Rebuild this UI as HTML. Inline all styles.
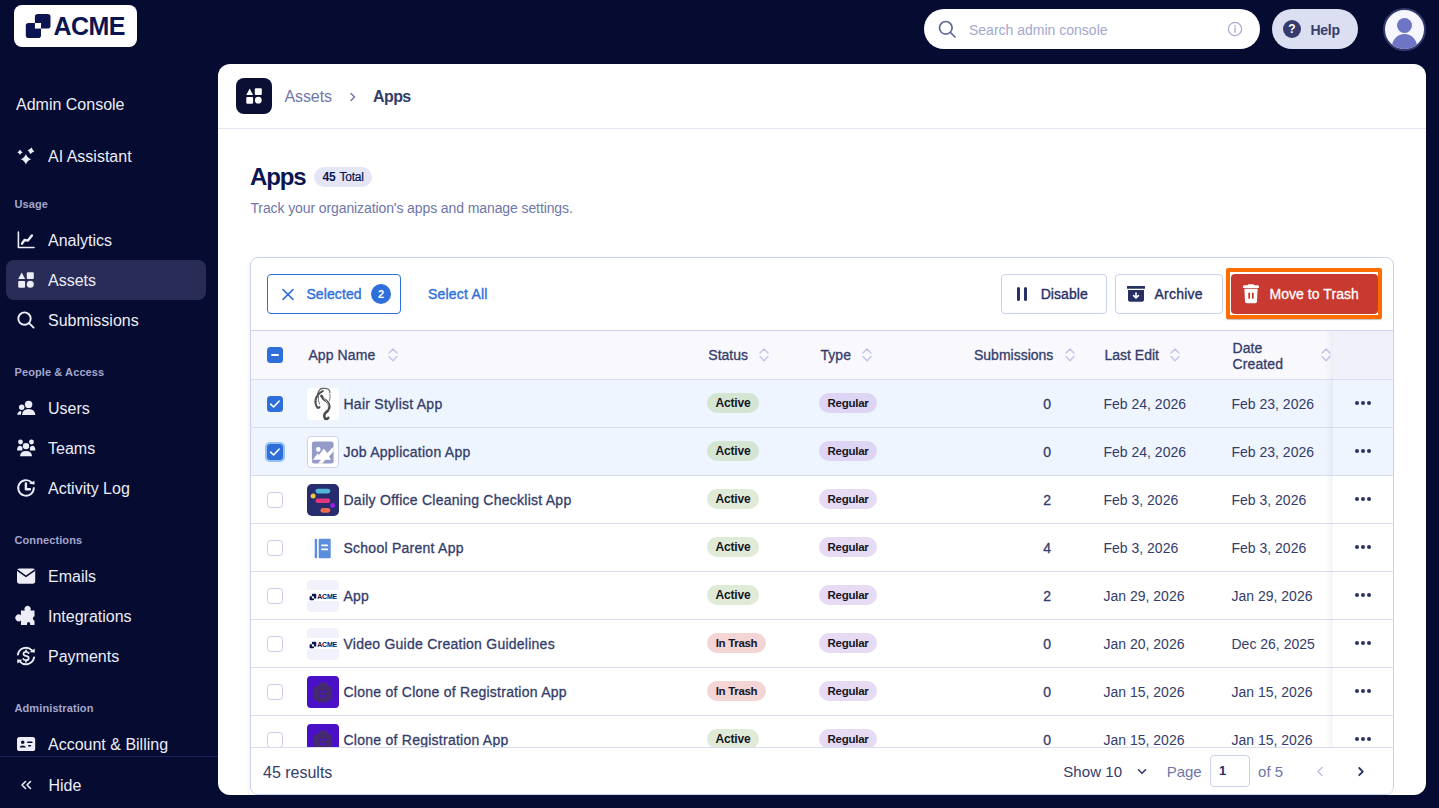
<!DOCTYPE html>
<html><head><meta charset="utf-8">
<style>
*{box-sizing:border-box;margin:0;padding:0}
html,body{width:1439px;height:808px;overflow:hidden;background:#060B31;font-family:"Liberation Sans",sans-serif;position:relative}
.a{position:absolute}
.t{position:absolute;white-space:nowrap}
.med{-webkit-text-stroke:0.25px currentColor}
svg{position:absolute;overflow:visible}
</style></head><body>
<div class="a" style="left:14px;top:5px;width:123px;height:42px;background:#fff;border-radius:8px"></div>
<svg style="left:25px;top:13px" width="27" height="26" viewBox="0 0 27 26"><rect x="0.8" y="10" width="15.2" height="15" rx="2.8" fill="#0A1551"/><rect x="9.9" y="0.9" width="15.6" height="14.7" rx="2.8" fill="#0A1551"/><rect x="9.9" y="10" width="6.1" height="5.6" fill="#fff"/></svg>
<div class="t" style="left:53.5px;top:11.0px;font-size:25px;line-height:30px;color:#0A1551;font-weight:bold;letter-spacing:-0.6px;">ACME</div>
<div class="a" style="left:924px;top:9px;width:336px;height:40px;background:#fff;border-radius:20px"></div>
<svg style="left:936px;top:19px" width="22" height="22" viewBox="0 0 22 22"><circle cx="9.8" cy="8.8" r="6.3" fill="none" stroke="#5F6699" stroke-width="1.7"/><path d="M14.5 13.5l4.5 4.5" stroke="#5F6699" stroke-width="1.7" stroke-linecap="round"/></svg>
<div class="t" style="left:969px;top:19.6px;font-size:14px;line-height:20px;color:#A3A8CD;font-weight:normal;">Search admin console</div>
<svg style="left:1227px;top:21px" width="16" height="16" viewBox="0 0 16 16"><circle cx="8" cy="8" r="6.6" fill="none" stroke="#A3A8CD" stroke-width="1.2"/><path d="M8 7v4.2" stroke="#A3A8CD" stroke-width="1.3" stroke-linecap="round"/><circle cx="8" cy="4.9" r="0.8" fill="#A3A8CD"/></svg>
<div class="a" style="left:1272px;top:9px;width:86px;height:40px;background:#DCDEF2;border-radius:20px"></div>
<div class="a" style="left:1283px;top:20px;width:18px;height:18px;background:#363C6B;border-radius:50%"></div>
<div class="t" style="left:1283px;top:20px;width:18px;height:18px;line-height:18px;text-align:center;color:#fff;font-size:12px;font-weight:bold">?</div>
<div class="t" style="left:1310.5px;top:19.6px;font-size:14px;line-height:20px;color:#363C6B;font-weight:bold;letter-spacing:-0.3px;">Help</div>
<div class="a" style="left:1383px;top:7.5px;width:43px;height:43px;border-radius:50%;background:#F5F6FF;border:2.5px solid #35396B;overflow:hidden"><div class="a" style="left:11.5px;top:8.7px;width:15px;height:15px;border-radius:50%;background:#6E75C4"></div><div class="a" style="left:6.5px;top:24px;width:25px;height:22px;border-radius:12.5px 12.5px 0 0;background:#6E75C4"></div></div>
<div class="t" style="left:16px;top:95.0px;font-size:16px;line-height:20px;color:#ECEDF7;font-weight:normal;">Admin Console</div>
<div class="a" style="left:6px;top:260px;width:200px;height:40px;background:#292C57;border-radius:8px"></div>
<svg style="left:12px;top:140px" width="28" height="28" viewBox="0 0 28 28"><g fill="#ECEDF7"><path d="M8.00 9.50 Q8.83 11.47 10.80 12.30 Q8.83 13.13 8.00 15.10 Q7.17 13.13 5.20 12.30 Q7.17 11.47 8.00 9.50z"/><path d="M19.71 7.57 Q20.43 9.97 22.33 11.61 Q19.93 12.33 18.29 14.23 Q17.57 11.83 15.67 10.19 Q18.07 9.47 19.71 7.57z"/><path d="M13.90 13.90 Q15.25 17.85 19.20 19.20 Q15.25 20.55 13.90 24.50 Q12.55 20.55 8.60 19.20 Q12.55 17.85 13.90 13.90z"/></g></svg>
<div class="t" style="left:48px;top:147.0px;font-size:16px;line-height:20px;color:#ECEDF7;font-weight:normal;">AI Assistant</div>
<svg style="left:12px;top:226px" width="28" height="28" viewBox="0 0 28 28"><path d="M6.4 6v15.5H22" fill="none" stroke="#ECEDF7" stroke-width="1.6" stroke-linecap="round" stroke-linejoin="round"/><path d="M10 17.7L12.5 14L15.9 14.6L19.9 9.5" fill="none" stroke="#ECEDF7" stroke-width="2.4" stroke-linecap="round" stroke-linejoin="round"/></svg>
<div class="t" style="left:48px;top:231.0px;font-size:16px;line-height:20px;color:#ECEDF7;font-weight:normal;">Analytics</div>
<svg style="left:18px;top:272px" width="16" height="16" viewBox="0 0 16 16"><g fill="#ECEDF7"><path d="M3.7 0.4L7.1 7H0.2z"/><rect x="8.8" y="0.2" width="7" height="6.8" rx="1"/><rect x="0.2" y="8.9" width="6.9" height="6.8" rx="1"/><circle cx="12.3" cy="12.2" r="3.5"/></g></svg>
<div class="t" style="left:48px;top:271.0px;font-size:16px;line-height:20px;color:#ECEDF7;font-weight:normal;">Assets</div>
<svg style="left:12px;top:306px" width="28" height="28" viewBox="0 0 28 28"><circle cx="12.5" cy="12.6" r="6.2" fill="none" stroke="#ECEDF7" stroke-width="1.9"/><path d="M17.3 17.3L21.6 21.6" stroke="#ECEDF7" stroke-width="1.9" stroke-linecap="round"/></svg>
<div class="t" style="left:48px;top:311.0px;font-size:16px;line-height:20px;color:#ECEDF7;font-weight:normal;">Submissions</div>
<svg style="left:12px;top:394px" width="28" height="28" viewBox="0 0 28 28"><g fill="#ECEDF7"><circle cx="16.6" cy="10.4" r="3.7"/><path d="M10 21.1 Q10.3 14.9 16.6 14.9 Q22.9 14.9 23.4 21.1z"/><circle cx="9.7" cy="13.2" r="2.7"/><path d="M5.2 20.8 Q5.6 17.2 9.4 17 L8.9 20.8z"/></g></svg>
<div class="t" style="left:48px;top:399.0px;font-size:16px;line-height:20px;color:#ECEDF7;font-weight:normal;">Users</div>
<svg style="left:12px;top:434px" width="28" height="28" viewBox="0 0 28 28"><g fill="#ECEDF7"><circle cx="8.5" cy="8" r="2.4"/><circle cx="19.5" cy="8" r="2.4"/><circle cx="14" cy="12.1" r="3.2"/><path d="M5 16.6 Q5.2 11.8 8 11.8 Q9.6 11.8 10.2 13.3 Q10.6 15 10.3 16.6z"/><path d="M23.4 16.6 Q23.2 11.8 20.3 11.8 Q18.7 11.8 18.2 13.3 Q17.8 15 18 16.6z"/><path d="M8 22.2 Q8.3 17 14 17 Q19.7 17 20.1 22.2z"/></g></svg>
<div class="t" style="left:48px;top:439.0px;font-size:16px;line-height:20px;color:#ECEDF7;font-weight:normal;">Teams</div>
<svg style="left:12px;top:474px" width="28" height="28" viewBox="0 0 28 28"><path d="M21.8 14A7.8 7.8 0 1 1 19.6 8.5" fill="none" stroke="#ECEDF7" stroke-width="1.9" stroke-linecap="round"/><path d="M17 9.8L22.6 10.5L22.5 6.7z" fill="#ECEDF7"/><path d="M13.9 9.5v5.8h4" fill="none" stroke="#ECEDF7" stroke-width="2.4" stroke-linecap="round" stroke-linejoin="round"/></svg>
<div class="t" style="left:48px;top:479.0px;font-size:16px;line-height:20px;color:#ECEDF7;font-weight:normal;">Activity Log</div>
<svg style="left:12px;top:562px" width="28" height="28" viewBox="0 0 28 28"><rect x="5" y="6.4" width="18.2" height="15.3" rx="2.6" fill="#ECEDF7"/><path d="M5.2 8.2L14 14.4L22.9 8.2" fill="none" stroke="#060B31" stroke-width="1.5" stroke-linejoin="round"/></svg>
<div class="t" style="left:48px;top:567.0px;font-size:16px;line-height:20px;color:#ECEDF7;font-weight:normal;">Emails</div>
<svg style="left:12px;top:602px" width="28" height="28" viewBox="0 0 28 28"><path fill="#ECEDF7" d="M8.9 8.6h3.9a3.2 3.2 0 1 1 5.6 0h4.1v5.6a2.4 2.4 0 0 0 0 4.5v4.4h-4.3v-1.4a1.6 1.6 0 0 0-3.2 0v1.4H8.9v-4.6a3.4 3.4 0 1 1 0-5.3z"/></svg>
<div class="t" style="left:48px;top:607.0px;font-size:16px;line-height:20px;color:#ECEDF7;font-weight:normal;">Integrations</div>
<svg style="left:12px;top:642px" width="28" height="28" viewBox="0 0 28 28"><g fill="none" stroke="#ECEDF7" stroke-width="1.9" stroke-linecap="round"><path d="M5.9 12.6A8.2 8.2 0 0 1 19.8 8.2"/><path d="M22.1 15.4A8.2 8.2 0 0 1 8.2 19.8"/></g><path fill="#ECEDF7" d="M17.5 10.2L22.9 10.6L22.6 6.6z M10.5 17.8L5.1 17.4L5.4 21.4z"/><path d="M16.6 11.2Q16 9.9 14 9.9Q11.5 9.9 11.5 11.9Q11.5 13.4 14 13.9Q16.7 14.4 16.7 16.2Q16.7 18.2 14 18.2Q11.9 18.2 11.3 16.8M14 8.3v1.6M14 18.2v1.6" fill="none" stroke="#ECEDF7" stroke-width="1.7" stroke-linecap="round" stroke-linejoin="round"/></svg>
<div class="t" style="left:48px;top:647.0px;font-size:16px;line-height:20px;color:#ECEDF7;font-weight:normal;">Payments</div>
<svg style="left:12px;top:730px" width="28" height="28" viewBox="0 0 28 28"><rect x="5" y="7" width="18.2" height="14" rx="2.6" fill="#ECEDF7"/><g fill="#060B31"><circle cx="10.7" cy="12.3" r="1.7"/><path d="M7.6 17.6 Q8 15.5 10.7 15.5 Q13.5 15.5 13.9 17.6z"/><rect x="15" y="11.5" width="5.6" height="1.5" rx="0.75"/><rect x="16" y="14.9" width="3.2" height="1.5" rx="0.75"/></g></svg>
<div class="t" style="left:48px;top:735.0px;font-size:16px;line-height:20px;color:#ECEDF7;font-weight:normal;">Account &amp; Billing</div>
<div class="t" style="left:14.5px;top:194.0px;font-size:11px;line-height:20px;color:#A3A7CC;font-weight:bold;letter-spacing:0.1px;">Usage</div>
<div class="t" style="left:14.5px;top:362.0px;font-size:11px;line-height:20px;color:#A3A7CC;font-weight:bold;letter-spacing:0.1px;">People &amp; Access</div>
<div class="t" style="left:14.5px;top:530.0px;font-size:11px;line-height:20px;color:#A3A7CC;font-weight:bold;letter-spacing:0.1px;">Connections</div>
<div class="t" style="left:14.5px;top:698.0px;font-size:11px;line-height:20px;color:#A3A7CC;font-weight:bold;letter-spacing:0.1px;">Administration</div>
<div class="a" style="left:0;top:756px;width:218px;height:1px;background:#1A1F5C"></div>
<svg style="left:20px;top:780px" width="12" height="10" viewBox="0 0 12 10"><path d="M5.5 1.5L2 5L5.5 8.5M10.5 1.5L7 5L10.5 8.5" fill="none" stroke="#ECEDF7" stroke-width="1.6" stroke-linecap="round" stroke-linejoin="round"/></svg>
<div class="t" style="left:48.5px;top:776.0px;font-size:16px;line-height:20px;color:#ECEDF7;font-weight:normal;">Hide</div>
<div class="a" style="left:218px;top:64px;width:1208px;height:731px;background:#fff;border-radius:12px;overflow:hidden">
<div class="a" style="left:18px;top:14px;width:36px;height:36px;background:#0A0F33;border-radius:8px"></div>
<svg style="left:28px;top:24px" width="16" height="16" viewBox="0 0 16 16"><g fill="#fff"><path d="M3.7 0.6L7.1 7H0.3z"/><rect x="8.8" y="0.3" width="7" height="6.7" rx="1"/><rect x="0.3" y="8.9" width="6.8" height="6.8" rx="1"/><circle cx="12.3" cy="12.2" r="3.4"/></g></svg>
<div class="t" style="left:66.5px;top:23.299999999999997px;font-size:16px;line-height:20px;color:#6F76A7;font-weight:normal;letter-spacing:-0.1px;">Assets</div>
<svg style="left:131px;top:28px" width="8" height="10" viewBox="0 0 8 10"><path d="M2 1.5L5.5 5L2 8.5" fill="none" stroke="#6F76A7" stroke-width="1.5" stroke-linecap="round" stroke-linejoin="round"/></svg>
<div class="t" style="left:155px;top:23.299999999999997px;font-size:16px;line-height:20px;color:#343C6A;font-weight:bold;letter-spacing:-0.6px;">Apps</div>
<div class="a" style="left:0;top:64px;width:1208px;height:1px;background:#E3E5F5"></div>
<div class="t" style="left:32px;top:97.69999999999999px;font-size:24px;line-height:30px;color:#0A1551;font-weight:bold;letter-spacing:-1.1px;">Apps</div>
<div class="a" style="left:96px;top:103px;width:58px;height:20px;background:#E4E6F6;border-radius:10px"></div>
<div class="t" style="left:104.5px;top:102.5px;font-size:12px;line-height:20px;color:#0A1551;font-weight:bold;letter-spacing:-0.1px;">45</div>
<div class="t" style="left:121.39999999999998px;top:102.5px;font-size:12px;line-height:20px;color:#0A1551;font-weight:normal;letter-spacing:-0.2px;-webkit-text-stroke:0.2px #0A1551;">Total</div>
<div class="t" style="left:32.400000000000006px;top:133.6px;font-size:14px;line-height:20px;color:#6F76A7;font-weight:normal;letter-spacing:-0.1px;">Track your organization's apps and manage settings.</div>
</div>
<div class="a" style="left:245px;top:263px;width:5px;height:532px;background:linear-gradient(to right, rgba(120,110,90,0), rgba(120,110,90,0.05))"></div>
<div class="a" style="left:250px;top:257px;width:1144px;height:538px;border:1px solid #CBD0EE;border-radius:8px;overflow:hidden;background:#fff">
<div class="a" style="left:16px;top:16px;width:134px;height:40px;border:1px solid #2E6FDB;border-radius:4px"></div>
<svg style="left:31px;top:31px" width="12" height="11" viewBox="0 0 12 11"><path d="M1 0.6L11 10.4M11 0.6L1 10.4" stroke="#2E6FDB" stroke-width="1.5" stroke-linecap="round"/></svg>
<div class="t" style="left:55.39999999999998px;top:26.0px;font-size:14px;line-height:20px;color:#2E6FDB;font-weight:normal;letter-spacing:0.1px;-webkit-text-stroke:0.35px currentColor;">Selected</div>
<div class="a" style="left:120px;top:26px;width:20px;height:20px;background:#2E6FDB;border-radius:50%"></div>
<div class="t" style="left:120px;top:26px;width:20px;line-height:20px;text-align:center;font-size:11px;font-weight:bold;color:#fff">2</div>
<div class="t" style="left:177px;top:26.0px;font-size:14px;line-height:20px;color:#2E6FDB;font-weight:normal;letter-spacing:0.2px;-webkit-text-stroke:0.35px currentColor;">Select All</div>
<div class="a" style="left:750px;top:16px;width:106px;height:40px;border:1px solid #CBD0EE;border-radius:4px"></div>
<div class="a" style="left:766px;top:29.30000000000001px;width:3px;height:13.5px;background:#283063;border-radius:1.5px"></div>
<div class="a" style="left:773px;top:29.30000000000001px;width:3px;height:13.5px;background:#283063;border-radius:1.5px"></div>
<div class="t" style="left:789.7px;top:26.0px;font-size:14px;line-height:20px;color:#283063;font-weight:normal;letter-spacing:0.05px;-webkit-text-stroke:0.35px currentColor;">Disable</div>
<div class="a" style="left:864px;top:16px;width:108px;height:40px;border:1px solid #CBD0EE;border-radius:4px"></div>
<svg style="left:876px;top:28px" width="18" height="16" viewBox="0 0 18 16"><rect x="0" y="0" width="18" height="2.7" rx="0.5" fill="#283063"/><path d="M1 4h16v9.8a2 2 0 0 1-2 2H3a2 2 0 0 1-2-2z" fill="#283063"/><path d="M9 7.2v4.5M6.6 9.6L9 12L11.4 9.6" fill="none" stroke="#fff" stroke-width="1.7" stroke-linecap="round" stroke-linejoin="round"/></svg>
<div class="t" style="left:903.4000000000001px;top:26.0px;font-size:14px;line-height:20px;color:#283063;font-weight:normal;letter-spacing:0.25px;-webkit-text-stroke:0.35px currentColor;">Archive</div>
<div class="a" style="left:975px;top:10px;width:156px;height:51px;border:4px solid #FF6D00;border-radius:2px;background:#fff;box-shadow:0 1px 1px rgba(0,0,0,0.25)"></div>
<div class="a" style="left:980px;top:16px;width:147px;height:40px;background:#C8392F;border-radius:4px"></div>
<svg style="left:992px;top:26px" width="16" height="20" viewBox="0 0 16 20"><path d="M0.2 1.8Q0.4 1.2 1.2 1.2H4.6Q5 0.3 6 0.3H10Q11 0.3 11.4 1.2H14.8Q15.6 1.2 15.8 1.8L16 4H0z" fill="#fff"/><path d="M1.4 4.8H14.6L14 17.2Q13.9 19.2 12 19.2H4Q2.1 19.2 2 17.2z" fill="#fff"/><rect x="5.3" y="8.6" width="1.8" height="6.2" rx="0.9" fill="#C8392F"/><rect x="8.9" y="8.6" width="1.8" height="6.2" rx="0.9" fill="#C8392F"/></svg>
<div class="t" style="left:1018.5px;top:26.0px;font-size:14px;line-height:20px;color:#fff;font-weight:normal;letter-spacing:0.05px;-webkit-text-stroke:0.3px currentColor;">Move to Trash</div>
<div class="a" style="left:0px;top:72px;width:1142px;height:1px;background:#CFD3EE"></div>
<div class="a" style="left:0px;top:73px;width:1142px;height:48px;background:#F8F8FD"></div>
<div class="a" style="left:0px;top:121px;width:1142px;height:1px;background:#DADDF2"></div>
<div class="a" style="left:16px;top:89px;width:16px;height:16px;background:#2E6FDB;border-radius:3.5px"></div>
<div class="a" style="left:20px;top:96.19999999999999px;width:8px;height:1.8px;background:#fff;border-radius:1px"></div>
<div class="t" style="left:57.39999999999998px;top:87.0px;font-size:14px;line-height:20px;color:#343C6A;font-weight:normal;letter-spacing:0.1px;-webkit-text-stroke:0.3px currentColor;">App Name</div>
<svg style="left:137px;top:90px" width="11" height="14" viewBox="0 0 11 14"><path d="M1 5L5 0.9L9 5M1 8.6L5 12.7L9 8.6" fill="none" stroke="#C3C7EC" stroke-width="1.5" stroke-linecap="round" stroke-linejoin="round"/></svg>
<div class="t" style="left:457.29999999999995px;top:87.0px;font-size:14px;line-height:20px;color:#343C6A;font-weight:normal;-webkit-text-stroke:0.3px currentColor;">Status</div>
<svg style="left:508px;top:90px" width="11" height="14" viewBox="0 0 11 14"><path d="M1 5L5 0.9L9 5M1 8.6L5 12.7L9 8.6" fill="none" stroke="#C3C7EC" stroke-width="1.5" stroke-linecap="round" stroke-linejoin="round"/></svg>
<div class="t" style="left:569.6px;top:87.0px;font-size:14px;line-height:20px;color:#343C6A;font-weight:normal;-webkit-text-stroke:0.3px currentColor;">Type</div>
<svg style="left:611px;top:90px" width="11" height="14" viewBox="0 0 11 14"><path d="M1 5L5 0.9L9 5M1 8.6L5 12.7L9 8.6" fill="none" stroke="#C3C7EC" stroke-width="1.5" stroke-linecap="round" stroke-linejoin="round"/></svg>
<div class="t" style="left:723px;top:87.0px;font-size:14px;line-height:20px;color:#343C6A;font-weight:normal;-webkit-text-stroke:0.3px currentColor;">Submissions</div>
<svg style="left:814px;top:90px" width="11" height="14" viewBox="0 0 11 14"><path d="M1 5L5 0.9L9 5M1 8.6L5 12.7L9 8.6" fill="none" stroke="#C3C7EC" stroke-width="1.5" stroke-linecap="round" stroke-linejoin="round"/></svg>
<div class="t" style="left:853.5px;top:87.0px;font-size:14px;line-height:20px;color:#343C6A;font-weight:normal;-webkit-text-stroke:0.3px currentColor;">Last Edit</div>
<svg style="left:919px;top:90px" width="11" height="14" viewBox="0 0 11 14"><path d="M1 5L5 0.9L9 5M1 8.6L5 12.7L9 8.6" fill="none" stroke="#C3C7EC" stroke-width="1.5" stroke-linecap="round" stroke-linejoin="round"/></svg>
<div class="t" style="left:981.5999999999999px;top:79.5px;font-size:14px;line-height:20px;color:#343C6A;font-weight:normal;-webkit-text-stroke:0.3px currentColor;">Date</div>
<div class="t" style="left:981.5999999999999px;top:95.5px;font-size:14px;line-height:20px;color:#343C6A;font-weight:normal;letter-spacing:0.1px;-webkit-text-stroke:0.3px currentColor;">Created</div>
<svg style="left:1070px;top:90px" width="11" height="14" viewBox="0 0 11 14"><path d="M1 5L5 0.9L9 5M1 8.6L5 12.7L9 8.6" fill="none" stroke="#C3C7EC" stroke-width="1.5" stroke-linecap="round" stroke-linejoin="round"/></svg>
<div class="a" style="left:0px;top:122px;width:1142px;height:47px;background:#EEF5FE"></div>
<div class="a" style="left:0px;top:169px;width:1142px;height:1px;background:#DADDF2"></div>
<div class="a" style="left:16px;top:137.5px;width:16px;height:16px;background:#2E6FDB;border-radius:3.5px"></div>
<svg style="left:16px;top:137.5px" width="16" height="16" viewBox="0 0 16 16"><path d="M3.6 8.2L6.6 11L12.2 5" fill="none" stroke="#fff" stroke-width="1.6" stroke-linecap="round" stroke-linejoin="round"/></svg>
<div class="a" style="left:56px;top:129.5px;width:32px;height:32px;background:#fff;border-radius:4px"></div>
<svg style="left:56px;top:129.5px" width="32" height="32" viewBox="0 0 32 32"><g fill="none" stroke-linecap="round" stroke-linejoin="round"><path d="M10.6 6.4Q12 1 15 0.5Q19.5 0 21.5 1.2Q23 2.5 22.9 4.5" stroke="#6A6A6A" stroke-width="1.3"/><path d="M15.8 3.1Q10 6 8.6 11.5Q7.8 16 10.4 19.6Q12 20.5 12.5 19" stroke="#4E4E4E" stroke-width="2"/><path d="M11.5 8Q10.5 12 12.5 16" stroke="#777" stroke-width="1"/><path d="M14.4 7.8Q16 11 19.1 12.8Q22.6 15.5 22.2 19.8Q21.2 23 17.8 25.5Q16.5 28 18 30.6Q19.8 31.5 21.3 29.8" stroke="#4A4A4A" stroke-width="2.6"/><path d="M16.5 9.8Q19 12.6 20.8 15.2Q21.7 18.2 20.2 21.5" stroke="#fff" stroke-width="0.7"/><path d="M22.9 6.4Q23.6 9.5 22.4 12.5" stroke="#8A8A8A" stroke-width="1.1"/></g></svg>
<div class="t" style="left:92.5px;top:135.5px;font-size:14px;line-height:20px;color:#343C6A;font-weight:normal;letter-spacing:0.25px;-webkit-text-stroke:0.3px currentColor;">Hair Stylist App</div>
<div class="a" style="left:456px;top:135.0px;width:52px;height:20px;background:#D4E6D3;border-radius:10px"></div>
<div class="t" style="left:456px;top:135.0px;width:52px;line-height:20px;text-align:center;font-size:12px;font-weight:bold;letter-spacing:-0.15px;color:#16161F">Active</div>
<div class="a" style="left:568px;top:135.0px;width:58px;height:20px;background:#DDD5F3;border-radius:10px"></div>
<div class="t" style="left:568px;top:135.0px;width:58px;line-height:20px;text-align:center;font-size:11.5px;font-weight:bold;letter-spacing:-0.25px;color:#16161F">Regular</div>
<div class="t" style="left:600px;width:200px;top:135.5px;line-height:20px;text-align:right;font-size:14px;color:#343C6A;-webkit-text-stroke:0.3px currentColor;">0</div>
<div class="t" style="left:852.5px;top:135.5px;font-size:14px;line-height:20px;color:#343C6A;font-weight:normal;">Feb 24, 2026</div>
<div class="t" style="left:980.5px;top:135.5px;font-size:14px;line-height:20px;color:#343C6A;font-weight:normal;">Feb 23, 2026</div>
<div class="a" style="left:0px;top:170px;width:1142px;height:47px;background:#EEF5FE"></div>
<div class="a" style="left:0px;top:217px;width:1142px;height:1px;background:#DADDF2"></div>
<div class="a" style="left:14px;top:183.5px;width:20px;height:20px;background:#93C2F7;border-radius:5px"></div>
<div class="a" style="left:16px;top:185.5px;width:16px;height:16px;background:#2E6FDB;border-radius:3.5px"></div>
<svg style="left:16px;top:185.5px" width="16" height="16" viewBox="0 0 16 16"><path d="M3.6 8.2L6.6 11L12.2 5" fill="none" stroke="#fff" stroke-width="1.6" stroke-linecap="round" stroke-linejoin="round"/></svg>
<div class="a" style="left:56px;top:177.5px;width:32px;height:32px;background:#fff;border:1px solid #CDD1EE;border-radius:4px"></div>
<svg style="left:56px;top:177.5px" width="32" height="32" viewBox="0 0 32 32"><rect x="4.9" y="5.6" width="21.7" height="21.9" rx="2.5" fill="#959BC7"/><g fill="#fff"><circle cx="11.3" cy="13.4" r="2.3"/><path d="M5.5 24.5L10.5 17.5L12 19L16.8 12.8L20.3 17L26.6 10.5V15.3L22 20.5L24 23.8H18.2L15.4 27.5H11L14 23.8H5z"/></g></svg>
<div class="t" style="left:92.5px;top:183.5px;font-size:14px;line-height:20px;color:#343C6A;font-weight:normal;letter-spacing:0.25px;-webkit-text-stroke:0.3px currentColor;">Job Application App</div>
<div class="a" style="left:456px;top:183.0px;width:52px;height:20px;background:#D4E6D3;border-radius:10px"></div>
<div class="t" style="left:456px;top:183.0px;width:52px;line-height:20px;text-align:center;font-size:12px;font-weight:bold;letter-spacing:-0.15px;color:#16161F">Active</div>
<div class="a" style="left:568px;top:183.0px;width:58px;height:20px;background:#DDD5F3;border-radius:10px"></div>
<div class="t" style="left:568px;top:183.0px;width:58px;line-height:20px;text-align:center;font-size:11.5px;font-weight:bold;letter-spacing:-0.25px;color:#16161F">Regular</div>
<div class="t" style="left:600px;width:200px;top:183.5px;line-height:20px;text-align:right;font-size:14px;color:#343C6A;-webkit-text-stroke:0.3px currentColor;">0</div>
<div class="t" style="left:852.5px;top:183.5px;font-size:14px;line-height:20px;color:#343C6A;font-weight:normal;">Feb 24, 2026</div>
<div class="t" style="left:980.5px;top:183.5px;font-size:14px;line-height:20px;color:#343C6A;font-weight:normal;">Feb 23, 2026</div>
<div class="a" style="left:0px;top:265px;width:1142px;height:1px;background:#DADDF2"></div>
<div class="a" style="left:16px;top:233.5px;width:16px;height:16px;background:#fff;border:1.5px solid #C9CDEB;border-radius:3.5px"></div>
<div class="a" style="left:56px;top:225.5px;width:32px;height:32px;background:#262C6D;border-radius:5px"></div>
<svg style="left:56px;top:225.5px" width="32" height="32" viewBox="0 0 32 32"><rect x="8.5" y="4.7" width="14.8" height="4.8" rx="2.4" fill="#50B8D4"/><circle cx="6.1" cy="12" r="2.5" fill="#F5C542"/><rect x="8.5" y="14.5" width="14.8" height="4.5" rx="2.25" fill="#E6367B"/><circle cx="25.6" cy="21.4" r="2.4" fill="#9A20DF"/><rect x="13.4" y="24" width="9.9" height="4.7" rx="2.35" fill="#EE6A4A"/></svg>
<div class="t" style="left:92.5px;top:231.5px;font-size:14px;line-height:20px;color:#343C6A;font-weight:normal;letter-spacing:0.25px;-webkit-text-stroke:0.3px currentColor;">Daily Office Cleaning Checklist App</div>
<div class="a" style="left:456px;top:231.0px;width:52px;height:20px;background:#DFEBD7;border-radius:10px"></div>
<div class="t" style="left:456px;top:231.0px;width:52px;line-height:20px;text-align:center;font-size:12px;font-weight:bold;letter-spacing:-0.15px;color:#16161F">Active</div>
<div class="a" style="left:568px;top:231.0px;width:58px;height:20px;background:#E6DBF3;border-radius:10px"></div>
<div class="t" style="left:568px;top:231.0px;width:58px;line-height:20px;text-align:center;font-size:11.5px;font-weight:bold;letter-spacing:-0.25px;color:#16161F">Regular</div>
<div class="t" style="left:600px;width:200px;top:231.5px;line-height:20px;text-align:right;font-size:14px;color:#343C6A;-webkit-text-stroke:0.3px currentColor;">2</div>
<div class="t" style="left:852.5px;top:231.5px;font-size:14px;line-height:20px;color:#343C6A;font-weight:normal;">Feb 3, 2026</div>
<div class="t" style="left:980.5px;top:231.5px;font-size:14px;line-height:20px;color:#343C6A;font-weight:normal;">Feb 3, 2026</div>
<div class="a" style="left:0px;top:313px;width:1142px;height:1px;background:#DADDF2"></div>
<div class="a" style="left:16px;top:281.5px;width:16px;height:16px;background:#fff;border:1.5px solid #C9CDEB;border-radius:3.5px"></div>
<svg style="left:56px;top:273.5px" width="32" height="32" viewBox="0 0 32 32"><rect x="7.7" y="6.8" width="2.4" height="19.5" rx="1" fill="#5B8EDC"/><rect x="11.7" y="6.8" width="12" height="19.5" rx="1" fill="#5B8EDC"/><rect x="14.1" y="12.6" width="7.1" height="1.6" rx="0.8" fill="#fff"/><rect x="14.1" y="16.6" width="7.1" height="1.6" rx="0.8" fill="#fff"/></svg>
<div class="t" style="left:92.5px;top:279.5px;font-size:14px;line-height:20px;color:#343C6A;font-weight:normal;letter-spacing:0.25px;-webkit-text-stroke:0.3px currentColor;">School Parent App</div>
<div class="a" style="left:456px;top:279.0px;width:52px;height:20px;background:#DFEBD7;border-radius:10px"></div>
<div class="t" style="left:456px;top:279.0px;width:52px;line-height:20px;text-align:center;font-size:12px;font-weight:bold;letter-spacing:-0.15px;color:#16161F">Active</div>
<div class="a" style="left:568px;top:279.0px;width:58px;height:20px;background:#E6DBF3;border-radius:10px"></div>
<div class="t" style="left:568px;top:279.0px;width:58px;line-height:20px;text-align:center;font-size:11.5px;font-weight:bold;letter-spacing:-0.25px;color:#16161F">Regular</div>
<div class="t" style="left:600px;width:200px;top:279.5px;line-height:20px;text-align:right;font-size:14px;color:#343C6A;-webkit-text-stroke:0.3px currentColor;">4</div>
<div class="t" style="left:852.5px;top:279.5px;font-size:14px;line-height:20px;color:#343C6A;font-weight:normal;">Feb 3, 2026</div>
<div class="t" style="left:980.5px;top:279.5px;font-size:14px;line-height:20px;color:#343C6A;font-weight:normal;">Feb 3, 2026</div>
<div class="a" style="left:0px;top:361px;width:1142px;height:1px;background:#DADDF2"></div>
<div class="a" style="left:16px;top:329.5px;width:16px;height:16px;background:#fff;border:1.5px solid #C9CDEB;border-radius:3.5px"></div>
<div class="a" style="left:56px;top:321.5px;width:32px;height:32px;background:#F1F2FB;border-radius:4px"></div>
<div class="a" style="left:56px;top:332.29999999999995px;width:32px;height:10.8px;background:#fff"></div>
<svg style="left:56px;top:321.5px" width="32" height="32" viewBox="0 0 32 32"><path fill="#0A1551" fill-rule="evenodd" d="M5.6 13.8h3a0.7 0.7 0 0 1 0.7 0.7v3.3a0.7 0.7 0 0 1-0.7 0.7H5.6a0.7 0.7 0 0 1-0.7-0.7v-3.3a0.7 0.7 0 0 1 0.7-0.7z M3.3 16.3h3a0.7 0.7 0 0 1 0.7 0.7v2.6a0.7 0.7 0 0 1-0.7 0.7H3.3a0.7 0.7 0 0 1-0.7-0.7v-2.6a0.7 0.7 0 0 1 0.7-0.7z"/><text x="10.2" y="19.4" font-family="Liberation Sans" font-weight="bold" font-size="7" letter-spacing="-0.2" fill="#0A1551">ACME</text></svg>
<div class="t" style="left:92.5px;top:327.5px;font-size:14px;line-height:20px;color:#343C6A;font-weight:normal;letter-spacing:0.25px;-webkit-text-stroke:0.3px currentColor;">App</div>
<div class="a" style="left:456px;top:327.0px;width:52px;height:20px;background:#DFEBD7;border-radius:10px"></div>
<div class="t" style="left:456px;top:327.0px;width:52px;line-height:20px;text-align:center;font-size:12px;font-weight:bold;letter-spacing:-0.15px;color:#16161F">Active</div>
<div class="a" style="left:568px;top:327.0px;width:58px;height:20px;background:#E6DBF3;border-radius:10px"></div>
<div class="t" style="left:568px;top:327.0px;width:58px;line-height:20px;text-align:center;font-size:11.5px;font-weight:bold;letter-spacing:-0.25px;color:#16161F">Regular</div>
<div class="t" style="left:600px;width:200px;top:327.5px;line-height:20px;text-align:right;font-size:14px;color:#343C6A;-webkit-text-stroke:0.3px currentColor;">2</div>
<div class="t" style="left:852.5px;top:327.5px;font-size:14px;line-height:20px;color:#343C6A;font-weight:normal;">Jan 29, 2026</div>
<div class="t" style="left:980.5px;top:327.5px;font-size:14px;line-height:20px;color:#343C6A;font-weight:normal;">Jan 29, 2026</div>
<div class="a" style="left:0px;top:409px;width:1142px;height:1px;background:#DADDF2"></div>
<div class="a" style="left:16px;top:377.5px;width:16px;height:16px;background:#fff;border:1.5px solid #C9CDEB;border-radius:3.5px"></div>
<div class="a" style="left:56px;top:369.5px;width:32px;height:32px;background:#F1F2FB;border-radius:4px"></div>
<div class="a" style="left:56px;top:380.29999999999995px;width:32px;height:10.8px;background:#fff"></div>
<svg style="left:56px;top:369.5px" width="32" height="32" viewBox="0 0 32 32"><path fill="#0A1551" fill-rule="evenodd" d="M5.6 13.8h3a0.7 0.7 0 0 1 0.7 0.7v3.3a0.7 0.7 0 0 1-0.7 0.7H5.6a0.7 0.7 0 0 1-0.7-0.7v-3.3a0.7 0.7 0 0 1 0.7-0.7z M3.3 16.3h3a0.7 0.7 0 0 1 0.7 0.7v2.6a0.7 0.7 0 0 1-0.7 0.7H3.3a0.7 0.7 0 0 1-0.7-0.7v-2.6a0.7 0.7 0 0 1 0.7-0.7z"/><text x="10.2" y="19.4" font-family="Liberation Sans" font-weight="bold" font-size="7" letter-spacing="-0.2" fill="#0A1551">ACME</text></svg>
<div class="t" style="left:92.5px;top:375.5px;font-size:14px;line-height:20px;color:#343C6A;font-weight:normal;letter-spacing:0.25px;-webkit-text-stroke:0.3px currentColor;">Video Guide Creation Guidelines</div>
<div class="a" style="left:456px;top:375.0px;width:59px;height:20px;background:#F3D5D6;border-radius:10px"></div>
<div class="t" style="left:456px;top:375.0px;width:59px;line-height:20px;text-align:center;font-size:11.5px;font-weight:bold;letter-spacing:-0.3px;color:#16161F">In Trash</div>
<div class="a" style="left:568px;top:375.0px;width:58px;height:20px;background:#E6DBF3;border-radius:10px"></div>
<div class="t" style="left:568px;top:375.0px;width:58px;line-height:20px;text-align:center;font-size:11.5px;font-weight:bold;letter-spacing:-0.25px;color:#16161F">Regular</div>
<div class="t" style="left:600px;width:200px;top:375.5px;line-height:20px;text-align:right;font-size:14px;color:#343C6A;-webkit-text-stroke:0.3px currentColor;">0</div>
<div class="t" style="left:852.5px;top:375.5px;font-size:14px;line-height:20px;color:#343C6A;font-weight:normal;">Jan 20, 2026</div>
<div class="t" style="left:980.5px;top:375.5px;font-size:14px;line-height:20px;color:#343C6A;font-weight:normal;">Dec 26, 2025</div>
<div class="a" style="left:0px;top:457px;width:1142px;height:1px;background:#DADDF2"></div>
<div class="a" style="left:16px;top:425.5px;width:16px;height:16px;background:#fff;border:1.5px solid #C9CDEB;border-radius:3.5px"></div>
<div class="a" style="left:56px;top:417.5px;width:32px;height:32px;background:#4A10C8;border-radius:4px"></div>
<svg style="left:56px;top:417.5px" width="32" height="32" viewBox="0 0 32 32"><g fill="#452A70"><rect x="11.8" y="6.8" width="8" height="4.5" rx="0.5"/><rect x="6.8" y="10.3" width="18.2" height="14.3" rx="2.5"/><rect x="10.8" y="23.5" width="9.9" height="2.8" rx="0.5"/></g><g fill="#4A10C8"><circle cx="13.2" cy="15.7" r="1.2"/><circle cx="18.1" cy="15.7" r="1.2"/><path d="M12.3 19.2Q15.6 22.6 18.9 19.2Q15.6 20.6 12.3 19.2z" stroke="#4A10C8" stroke-width="1"/></g></svg>
<div class="t" style="left:92.5px;top:423.5px;font-size:14px;line-height:20px;color:#343C6A;font-weight:normal;letter-spacing:0.25px;-webkit-text-stroke:0.3px currentColor;">Clone of Clone of Registration App</div>
<div class="a" style="left:456px;top:423.0px;width:59px;height:20px;background:#F3D5D6;border-radius:10px"></div>
<div class="t" style="left:456px;top:423.0px;width:59px;line-height:20px;text-align:center;font-size:11.5px;font-weight:bold;letter-spacing:-0.3px;color:#16161F">In Trash</div>
<div class="a" style="left:568px;top:423.0px;width:58px;height:20px;background:#E6DBF3;border-radius:10px"></div>
<div class="t" style="left:568px;top:423.0px;width:58px;line-height:20px;text-align:center;font-size:11.5px;font-weight:bold;letter-spacing:-0.25px;color:#16161F">Regular</div>
<div class="t" style="left:600px;width:200px;top:423.5px;line-height:20px;text-align:right;font-size:14px;color:#343C6A;-webkit-text-stroke:0.3px currentColor;">0</div>
<div class="t" style="left:852.5px;top:423.5px;font-size:14px;line-height:20px;color:#343C6A;font-weight:normal;">Jan 15, 2026</div>
<div class="t" style="left:980.5px;top:423.5px;font-size:14px;line-height:20px;color:#343C6A;font-weight:normal;">Jan 15, 2026</div>
<div class="a" style="left:0px;top:505px;width:1142px;height:1px;background:#DADDF2"></div>
<div class="a" style="left:16px;top:473.5px;width:16px;height:16px;background:#fff;border:1.5px solid #C9CDEB;border-radius:3.5px"></div>
<div class="a" style="left:56px;top:465.5px;width:32px;height:32px;background:#4A10C8;border-radius:4px"></div>
<svg style="left:56px;top:465.5px" width="32" height="32" viewBox="0 0 32 32"><g fill="#452A70"><rect x="11.8" y="6.8" width="8" height="4.5" rx="0.5"/><rect x="6.8" y="10.3" width="18.2" height="14.3" rx="2.5"/><rect x="10.8" y="23.5" width="9.9" height="2.8" rx="0.5"/></g><g fill="#4A10C8"><circle cx="13.2" cy="15.7" r="1.2"/><circle cx="18.1" cy="15.7" r="1.2"/><path d="M12.3 19.2Q15.6 22.6 18.9 19.2Q15.6 20.6 12.3 19.2z" stroke="#4A10C8" stroke-width="1"/></g></svg>
<div class="t" style="left:92.5px;top:471.5px;font-size:14px;line-height:20px;color:#343C6A;font-weight:normal;letter-spacing:0.25px;-webkit-text-stroke:0.3px currentColor;">Clone of Registration App</div>
<div class="a" style="left:456px;top:471.0px;width:52px;height:20px;background:#DFEBD7;border-radius:10px"></div>
<div class="t" style="left:456px;top:471.0px;width:52px;line-height:20px;text-align:center;font-size:12px;font-weight:bold;letter-spacing:-0.15px;color:#16161F">Active</div>
<div class="a" style="left:568px;top:471.0px;width:58px;height:20px;background:#E6DBF3;border-radius:10px"></div>
<div class="t" style="left:568px;top:471.0px;width:58px;line-height:20px;text-align:center;font-size:11.5px;font-weight:bold;letter-spacing:-0.25px;color:#16161F">Regular</div>
<div class="t" style="left:600px;width:200px;top:471.5px;line-height:20px;text-align:right;font-size:14px;color:#343C6A;-webkit-text-stroke:0.3px currentColor;">0</div>
<div class="t" style="left:852.5px;top:471.5px;font-size:14px;line-height:20px;color:#343C6A;font-weight:normal;">Jan 15, 2026</div>
<div class="t" style="left:980.5px;top:471.5px;font-size:14px;line-height:20px;color:#343C6A;font-weight:normal;">Jan 15, 2026</div>
<div class="a" style="left:1074px;top:73px;width:8px;height:464px;background:linear-gradient(to right, rgba(30,40,90,0), rgba(30,40,90,0.05))"></div>
<div class="a" style="left:1082px;top:73px;width:60px;height:48px;background:#F1F1FB"></div>
<div class="a" style="left:1103.8px;top:143.2px;width:4.3px;height:4.3px;background:#2B3160;border-radius:50%"></div>
<div class="a" style="left:1109.8999999999999px;top:143.2px;width:4.3px;height:4.3px;background:#2B3160;border-radius:50%"></div>
<div class="a" style="left:1116.0px;top:143.2px;width:4.3px;height:4.3px;background:#2B3160;border-radius:50%"></div>
<div class="a" style="left:1103.8px;top:191.2px;width:4.3px;height:4.3px;background:#2B3160;border-radius:50%"></div>
<div class="a" style="left:1109.8999999999999px;top:191.2px;width:4.3px;height:4.3px;background:#2B3160;border-radius:50%"></div>
<div class="a" style="left:1116.0px;top:191.2px;width:4.3px;height:4.3px;background:#2B3160;border-radius:50%"></div>
<div class="a" style="left:1103.8px;top:239.2px;width:4.3px;height:4.3px;background:#2B3160;border-radius:50%"></div>
<div class="a" style="left:1109.8999999999999px;top:239.2px;width:4.3px;height:4.3px;background:#2B3160;border-radius:50%"></div>
<div class="a" style="left:1116.0px;top:239.2px;width:4.3px;height:4.3px;background:#2B3160;border-radius:50%"></div>
<div class="a" style="left:1103.8px;top:287.20000000000005px;width:4.3px;height:4.3px;background:#2B3160;border-radius:50%"></div>
<div class="a" style="left:1109.8999999999999px;top:287.20000000000005px;width:4.3px;height:4.3px;background:#2B3160;border-radius:50%"></div>
<div class="a" style="left:1116.0px;top:287.20000000000005px;width:4.3px;height:4.3px;background:#2B3160;border-radius:50%"></div>
<div class="a" style="left:1103.8px;top:335.20000000000005px;width:4.3px;height:4.3px;background:#2B3160;border-radius:50%"></div>
<div class="a" style="left:1109.8999999999999px;top:335.20000000000005px;width:4.3px;height:4.3px;background:#2B3160;border-radius:50%"></div>
<div class="a" style="left:1116.0px;top:335.20000000000005px;width:4.3px;height:4.3px;background:#2B3160;border-radius:50%"></div>
<div class="a" style="left:1103.8px;top:383.20000000000005px;width:4.3px;height:4.3px;background:#2B3160;border-radius:50%"></div>
<div class="a" style="left:1109.8999999999999px;top:383.20000000000005px;width:4.3px;height:4.3px;background:#2B3160;border-radius:50%"></div>
<div class="a" style="left:1116.0px;top:383.20000000000005px;width:4.3px;height:4.3px;background:#2B3160;border-radius:50%"></div>
<div class="a" style="left:1103.8px;top:431.20000000000005px;width:4.3px;height:4.3px;background:#2B3160;border-radius:50%"></div>
<div class="a" style="left:1109.8999999999999px;top:431.20000000000005px;width:4.3px;height:4.3px;background:#2B3160;border-radius:50%"></div>
<div class="a" style="left:1116.0px;top:431.20000000000005px;width:4.3px;height:4.3px;background:#2B3160;border-radius:50%"></div>
<div class="a" style="left:1103.8px;top:479.20000000000005px;width:4.3px;height:4.3px;background:#2B3160;border-radius:50%"></div>
<div class="a" style="left:1109.8999999999999px;top:479.20000000000005px;width:4.3px;height:4.3px;background:#2B3160;border-radius:50%"></div>
<div class="a" style="left:1116.0px;top:479.20000000000005px;width:4.3px;height:4.3px;background:#2B3160;border-radius:50%"></div>
<div class="a" style="left:0px;top:489px;width:1142px;height:48px;background:#fff"></div>
<div class="a" style="left:0px;top:489px;width:1142px;height:1px;background:#DADDF2"></div>
<div class="t" style="left:12px;top:504.5px;font-size:16px;line-height:20px;color:#343C6A;font-weight:normal;">45 results</div>
<div class="t" style="left:812.3px;top:503.5px;font-size:15px;line-height:20px;color:#343C6A;font-weight:normal;letter-spacing:0.05px;">Show 10</div>
<svg style="left:886px;top:509.5px" width="10" height="8" viewBox="0 0 10 8"><path d="M1.5 1.8L5 5.3L8.5 1.8" fill="none" stroke="#343C6A" stroke-width="1.6" stroke-linecap="round" stroke-linejoin="round"/></svg>
<div class="t" style="left:915.75px;top:503.5px;font-size:15px;line-height:20px;color:#6F76A7;font-weight:normal;letter-spacing:-0.1px;">Page</div>
<div class="a" style="left:959px;top:497px;width:40px;height:32px;border:1px solid #CBD0EE;border-radius:4px;background:#fff"></div>
<div class="t" style="left:968px;top:503.0px;font-size:13px;line-height:20px;color:#283063;font-weight:bold;">1</div>
<div class="t" style="left:1007px;top:503.5px;font-size:15px;line-height:20px;color:#6F76A7;font-weight:normal;letter-spacing:0.05px;">of 5</div>
<svg style="left:1065px;top:508px" width="8" height="11" viewBox="0 0 8 11"><path d="M6 1.5L2 5.5L6 9.5" fill="none" stroke="#BDC1E3" stroke-width="1.5" stroke-linecap="round" stroke-linejoin="round"/></svg>
<svg style="left:1106px;top:508px" width="8" height="11" viewBox="0 0 8 11"><path d="M2.2 2L5.8 5.6L2.2 9.2" fill="none" stroke="#283063" stroke-width="1.8" stroke-linecap="round" stroke-linejoin="round"/></svg>
</div>
</body></html>
